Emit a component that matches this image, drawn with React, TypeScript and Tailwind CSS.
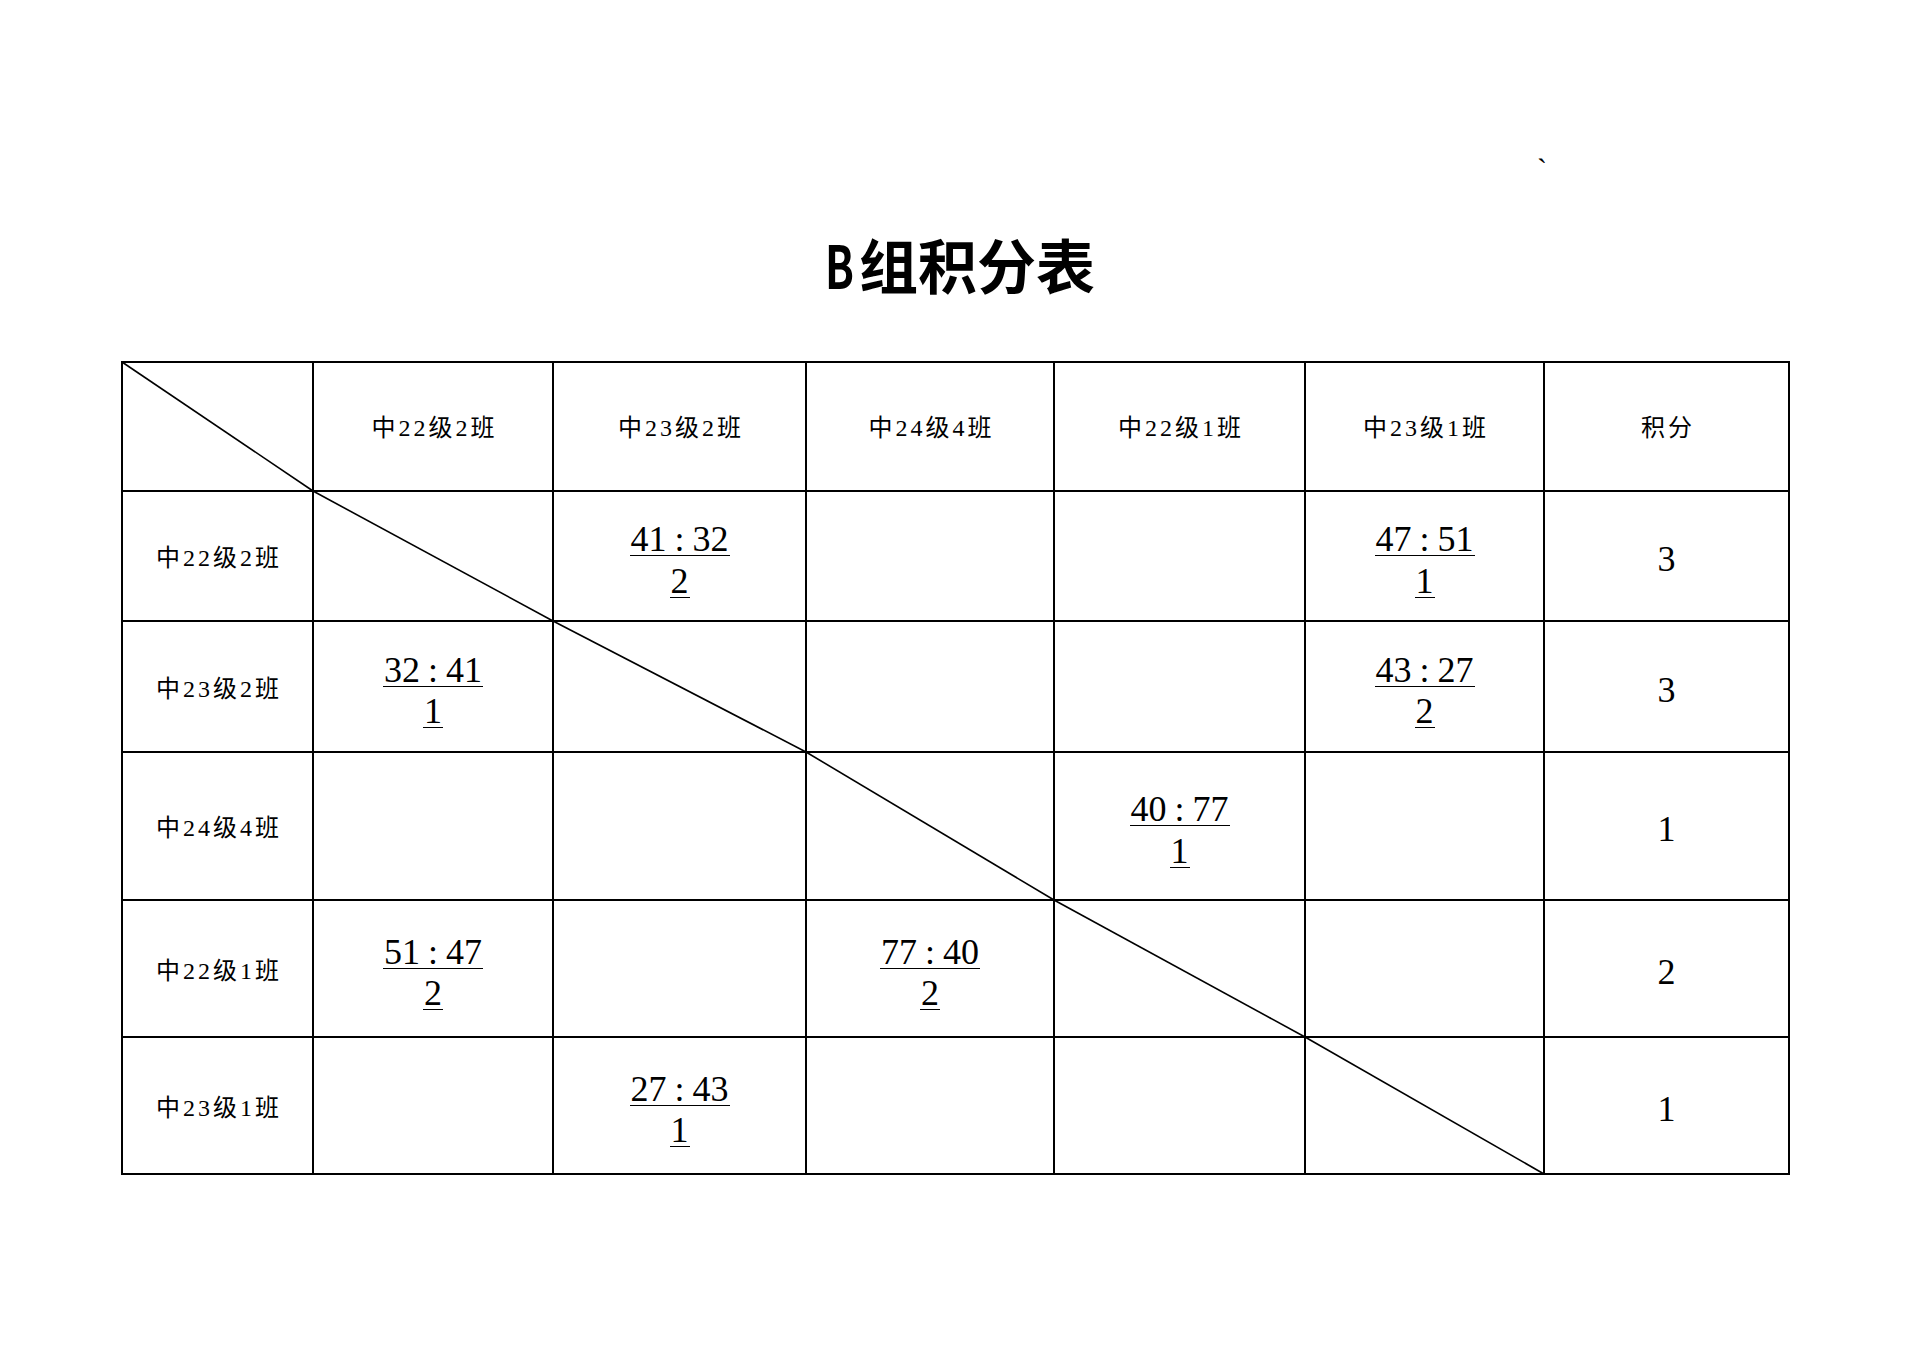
import React from "react";

const teams = ["中22级2班", "中23级2班", "中24级4班", "中22级1班", "中23级1班"];

// key = 行-列 : [本队, 对手, 得分]
const scores: Record<string, [string, string, string]> = {
  "0-1": ["41", "32", "2"],
  "0-4": ["47", "51", "1"],
  "1-0": ["32", "41", "1"],
  "1-4": ["43", "27", "2"],
  "2-3": ["40", "77", "1"],
  "3-0": ["51", "47", "2"],
  "3-2": ["77", "40", "2"],
  "4-1": ["27", "43", "1"],
};

const points = ["3", "3", "1", "2", "1"];

const font = "font-['Liberation_Serif','Noto_Sans_CJK_SC',serif]";

const Diagonal = () => (
  <svg className="absolute -left-px -top-px w-[calc(100%+2px)] h-[calc(100%+2px)] overflow-visible">
    <line x1="0" y1="0" x2="100%" y2="100%" stroke="#000" strokeWidth="1.6" />
  </svg>
);

const Label = ({ text }: { text: string }) => (
  <span className="text-[24px] leading-[28px] tracking-[3px] pl-[3px] text-black">{text}</span>
);

const Score = ({ a, b, p }: { a: string; b: string; p: string }) => (
  <div className="flex flex-col items-center pt-[10px]">
    <span className="border-b-[1.5px] border-black text-[36px] leading-[31px] px-[1px] flex">
      <span>{a}</span>
      <span className="inline-block w-[26px] text-center">:</span>
      <span>{b}</span>
    </span>
    <span className="mt-[9.5px] border-b-[1.5px] border-black text-[36px] leading-[31px] px-[1px]">{p}</span>
  </div>
);

export default function App() {
  return (
    <div className={`w-[1920px] h-[1358px] bg-white text-black ${font} pt-[156px]`}>
      <div className="h-[79px] pl-[1537px] text-[30px] leading-[26px]">`</div>

      <h1 className="h-[58px] flex justify-center text-[59px] leading-[58px] font-bold font-['Noto_Sans_CJK_SC',sans-serif]">
        <span className="inline-block w-[34px] scale-x-[0.72] origin-left">B</span>
        <span>组积分表</span>
      </h1>

      <div className="mt-[68px] ml-[121px] w-fit grid grid-cols-[191px_240px_253px_248px_251px_239px_245px] grid-rows-[129px_130px_131px_148px_137px_137px] border-l-2 border-t-2 border-black">
        {/* 表头 */}
        <div className="relative border-r-2 border-b-2 border-black">
          <Diagonal />
        </div>
        {teams.map((t) => (
          <div key={t} className="border-r-2 border-b-2 border-black flex items-center justify-center pt-[2px]">
            <Label text={t} />
          </div>
        ))}
        <div className="border-r-2 border-b-2 border-black flex items-center justify-center pt-[2px]">
          <Label text="积分" />
        </div>

        {/* 各行 */}
        {teams.map((t, r) => (
          <React.Fragment key={t}>
            <div className="border-r-2 border-b-2 border-black flex items-center justify-center pt-[4px]">
              <Label text={t} />
            </div>
            {teams.map((_, c) => {
              const s = scores[`${r}-${c}`];
              return (
                <div key={c} className="relative border-r-2 border-b-2 border-black flex items-center justify-center">
                  {r === c && <Diagonal />}
                  {s && <Score a={s[0]} b={s[1]} p={s[2]} />}
                </div>
              );
            })}
            <div className="border-r-2 border-b-2 border-black flex items-center justify-center pt-[7px]">
              <span className="text-[36px] leading-[31px]">{points[r]}</span>
            </div>
          </React.Fragment>
        ))}
      </div>
    </div>
  );
}
